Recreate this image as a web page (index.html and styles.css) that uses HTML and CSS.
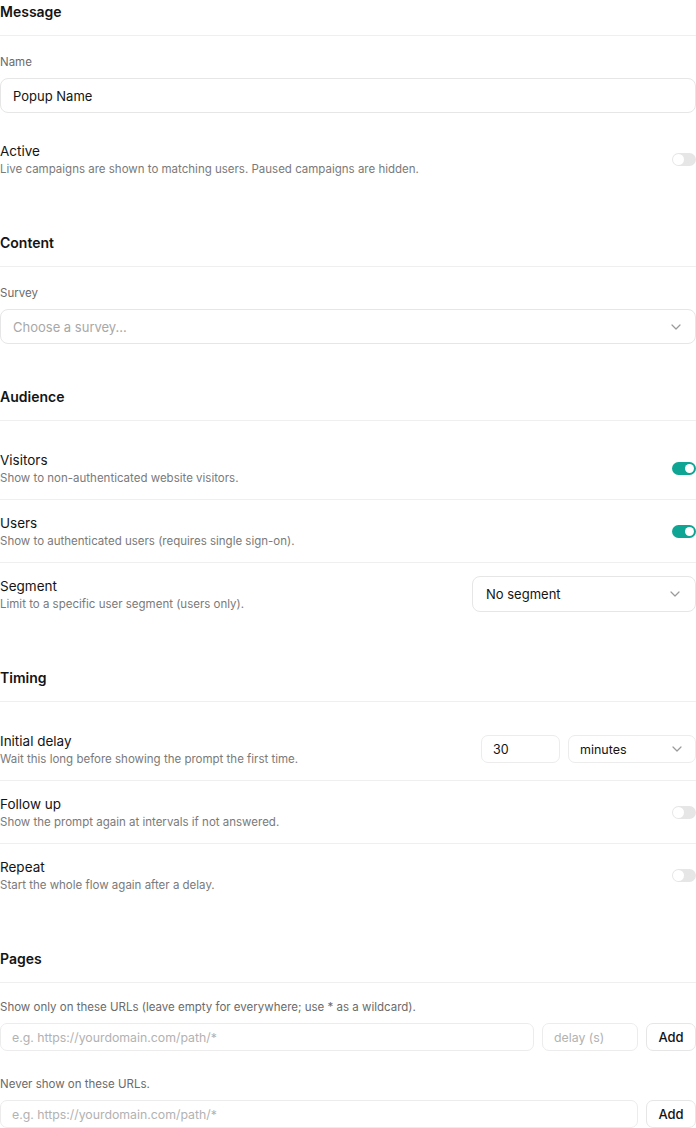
FILE: index.html
```html
<!DOCTYPE html>
<html lang="en">
<head>
  <meta charset="UTF-8" />
  <title>Popup Settings</title>
  <link rel="stylesheet" href="styles.css">
</head>
<body>
  <!-- Message -->
  <section class="section">
    <h3 class="section-title">Message</h3>
    <div class="field">
      <label class="field-label">Name</label>
      <input class="text-input" type="text" value="Popup Name" />
    </div>
    <div class="setting-row first-row">
      <div class="setting-text">
        <div class="setting-title">Active</div>
        <div class="setting-desc">Live campaigns are shown to matching users. Paused campaigns are hidden.</div>
      </div>
      <span class="toggle"><span class="knob"></span></span>
    </div>
  </section>

  <!-- Content -->
  <section class="section">
    <h3 class="section-title">Content</h3>
    <div class="field">
      <label class="field-label">Survey</label>
      <div class="select-box select-full">
        <span class="placeholder">Choose a survey...</span>
        <svg class="chevron" width="10" height="6" viewBox="0 0 10 6"><path d="M1 1l4 4 4-4" fill="none" stroke="#9a9a9a" stroke-width="1.2" stroke-linecap="round" stroke-linejoin="round"/></svg>
      </div>
    </div>
  </section>

  <!-- Audience -->
  <section class="section">
    <h3 class="section-title">Audience</h3>
    <div class="rows">
      <div class="setting-row">
        <div class="setting-text">
          <div class="setting-title">Visitors</div>
          <div class="setting-desc">Show to non-authenticated website visitors.</div>
        </div>
        <span class="toggle on"><span class="knob"></span></span>
      </div>
      <div class="setting-row">
        <div class="setting-text">
          <div class="setting-title">Users</div>
          <div class="setting-desc">Show to authenticated users (requires single sign-on).</div>
        </div>
        <span class="toggle on"><span class="knob"></span></span>
      </div>
      <div class="setting-row">
        <div class="setting-text">
          <div class="setting-title">Segment</div>
          <div class="setting-desc">Limit to a specific user segment (users only).</div>
        </div>
        <div class="select-box select-segment">
          <span>No segment</span>
          <svg class="chevron" width="10" height="6" viewBox="0 0 10 6"><path d="M1 1l4 4 4-4" fill="none" stroke="#9a9a9a" stroke-width="1.2" stroke-linecap="round" stroke-linejoin="round"/></svg>
        </div>
      </div>
    </div>
  </section>

  <!-- Timing -->
  <section class="section">
    <h3 class="section-title">Timing</h3>
    <div class="rows">
      <div class="setting-row">
        <div class="setting-text">
          <div class="setting-title">Initial delay</div>
          <div class="setting-desc">Wait this long before showing the prompt the first time.</div>
        </div>
        <div class="delay-controls">
          <input class="small-input number-input" type="text" value="30" />
          <div class="select-box small-select">
            <span>minutes</span>
            <svg class="chevron" width="10" height="6" viewBox="0 0 10 6"><path d="M1 1l4 4 4-4" fill="none" stroke="#9a9a9a" stroke-width="1.2" stroke-linecap="round" stroke-linejoin="round"/></svg>
          </div>
        </div>
      </div>
      <div class="setting-row">
        <div class="setting-text">
          <div class="setting-title">Follow up</div>
          <div class="setting-desc">Show the prompt again at intervals if not answered.</div>
        </div>
        <span class="toggle"><span class="knob"></span></span>
      </div>
      <div class="setting-row">
        <div class="setting-text">
          <div class="setting-title">Repeat</div>
          <div class="setting-desc">Start the whole flow again after a delay.</div>
        </div>
        <span class="toggle"><span class="knob"></span></span>
      </div>
    </div>
  </section>

  <!-- Pages -->
  <section class="section section-pages">
    <h3 class="section-title">Pages</h3>
    <div class="field">
      <label class="field-label">Show only on these URLs (leave empty for everywhere; use * as a wildcard).</label>
      <div class="url-row">
        <input class="small-input url-input" type="text" placeholder="e.g. https://yourdomain.com/path/*" />
        <input class="small-input delay-input" type="text" placeholder="delay (s)" />
        <button class="add-btn">Add</button>
      </div>
    </div>
    <div class="field field-spaced">
      <label class="field-label">Never show on these URLs.</label>
      <div class="url-row">
        <input class="small-input url-input" type="text" placeholder="e.g. https://yourdomain.com/path/*" />
        <button class="add-btn">Add</button>
      </div>
    </div>
  </section>
</body>
</html>
```

FILE: styles.css
```css
/*
  --------------------------------------------
  BASICS
  --------------------------------------------
*/
* {
  margin: 0;
  padding: 0;
  box-sizing: border-box;
}

body {
  font-family: "Inter", "Liberation Sans", sans-serif;
  color: #141414;
  background-color: #fff;
  width: 696px;
  padding-top: 2px;
  overflow: hidden;
}

input,
button {
  font-family: inherit;
}

/*
  --------------------------------------------
  SECTIONS
  --------------------------------------------
*/
.section {
  margin-bottom: 43px;
}

.section-title {
  font-size: 14px;
  font-weight: 600;
  line-height: 20px;
  padding-bottom: 13px;
  border-bottom: 1px solid #efefef;
}

.field {
  padding-top: 17px;
  display: flex;
  flex-direction: column;
  gap: 7px;
}

.section-pages .field {
  padding-top: 15px;
}

.section-pages .field-spaced {
  padding-top: 24px;
}

.field-label {
  font-size: 11.5px;
  line-height: 18px;
  color: #6b6b6b;
}

.text-input {
  height: 35px;
  width: 100%;
  border: 1px solid #e6e6e6;
  border-radius: 8px;
  padding: 0 12px;
  font-size: 13px;
  color: #141414;
  outline: none;
}

/*
  Select-like boxes
*/
.select-box {
  display: flex;
  align-items: center;
  justify-content: space-between;
  border: 1px solid #e6e6e6;
  border-radius: 8px;
  font-size: 13px;
  color: #141414;
  background-color: #fff;
}

.select-full {
  height: 35px;
  padding: 0 12px;
}

.select-segment {
  width: 224px;
  height: 36px;
  padding: 0 13px;
}

.placeholder {
  color: #a8a8a8;
}

.chevron {
  margin-right: 2px;
}

/*
  --------------------------------------------
  SETTING ROWS
  --------------------------------------------
*/
.rows {
  padding-top: 16px;
}

.setting-row {
  display: flex;
  align-items: center;
  justify-content: space-between;
  padding: 13px 0;
  border-bottom: 1px solid #efefef;
}

.setting-row:last-child {
  border-bottom: none;
}

.first-row {
  margin-top: 16px;
  padding-top: 12px;
}

.setting-title {
  font-size: 13.5px;
  font-weight: 400;
  line-height: 20px;
}

.setting-desc {
  font-size: 11.5px;
  line-height: 16px;
  color: #7a7a7a;
}

/* Toggle switch */
.toggle {
  width: 24px;
  height: 13px;
  border-radius: 7px;
  background-color: #e6e6e6;
  display: flex;
  align-items: center;
  padding: 1px;
  flex-shrink: 0;
}

.toggle .knob {
  width: 11px;
  height: 11px;
  border-radius: 50%;
  background-color: #fff;
}

.toggle.on {
  background-color: #0ea594;
  justify-content: flex-end;
  padding: 2px;
}

.toggle.on .knob {
  width: 9px;
  height: 9px;
}

/*
  Timing controls
*/
.delay-controls {
  display: flex;
  gap: 8px;
}

.small-input {
  height: 28px;
  border: 1px solid #ececec;
  border-radius: 7px;
  padding: 0 11px;
  font-size: 12.3px;
  color: #141414;
  outline: none;
}

.small-input::placeholder {
  color: #b2b2b2;
}

.number-input {
  width: 79px;
  font-size: 12.5px;
}

.small-select {
  width: 128px;
  height: 28px;
  border-color: #ececec;
  border-radius: 7px;
  padding: 0 11px;
  font-size: 12.5px;
}

/*
  Pages URL rows
*/
.url-row {
  display: flex;
  gap: 8px;
}

.url-input {
  flex: 1;
}

.delay-input {
  width: 96px;
}

.add-btn {
  width: 50px;
  height: 28px;
  border: 1px solid #e6e6e6;
  border-radius: 7px;
  background-color: #fff;
  font-size: 13px;
  font-weight: 500;
  color: #141414;
  cursor: pointer;
}
```
